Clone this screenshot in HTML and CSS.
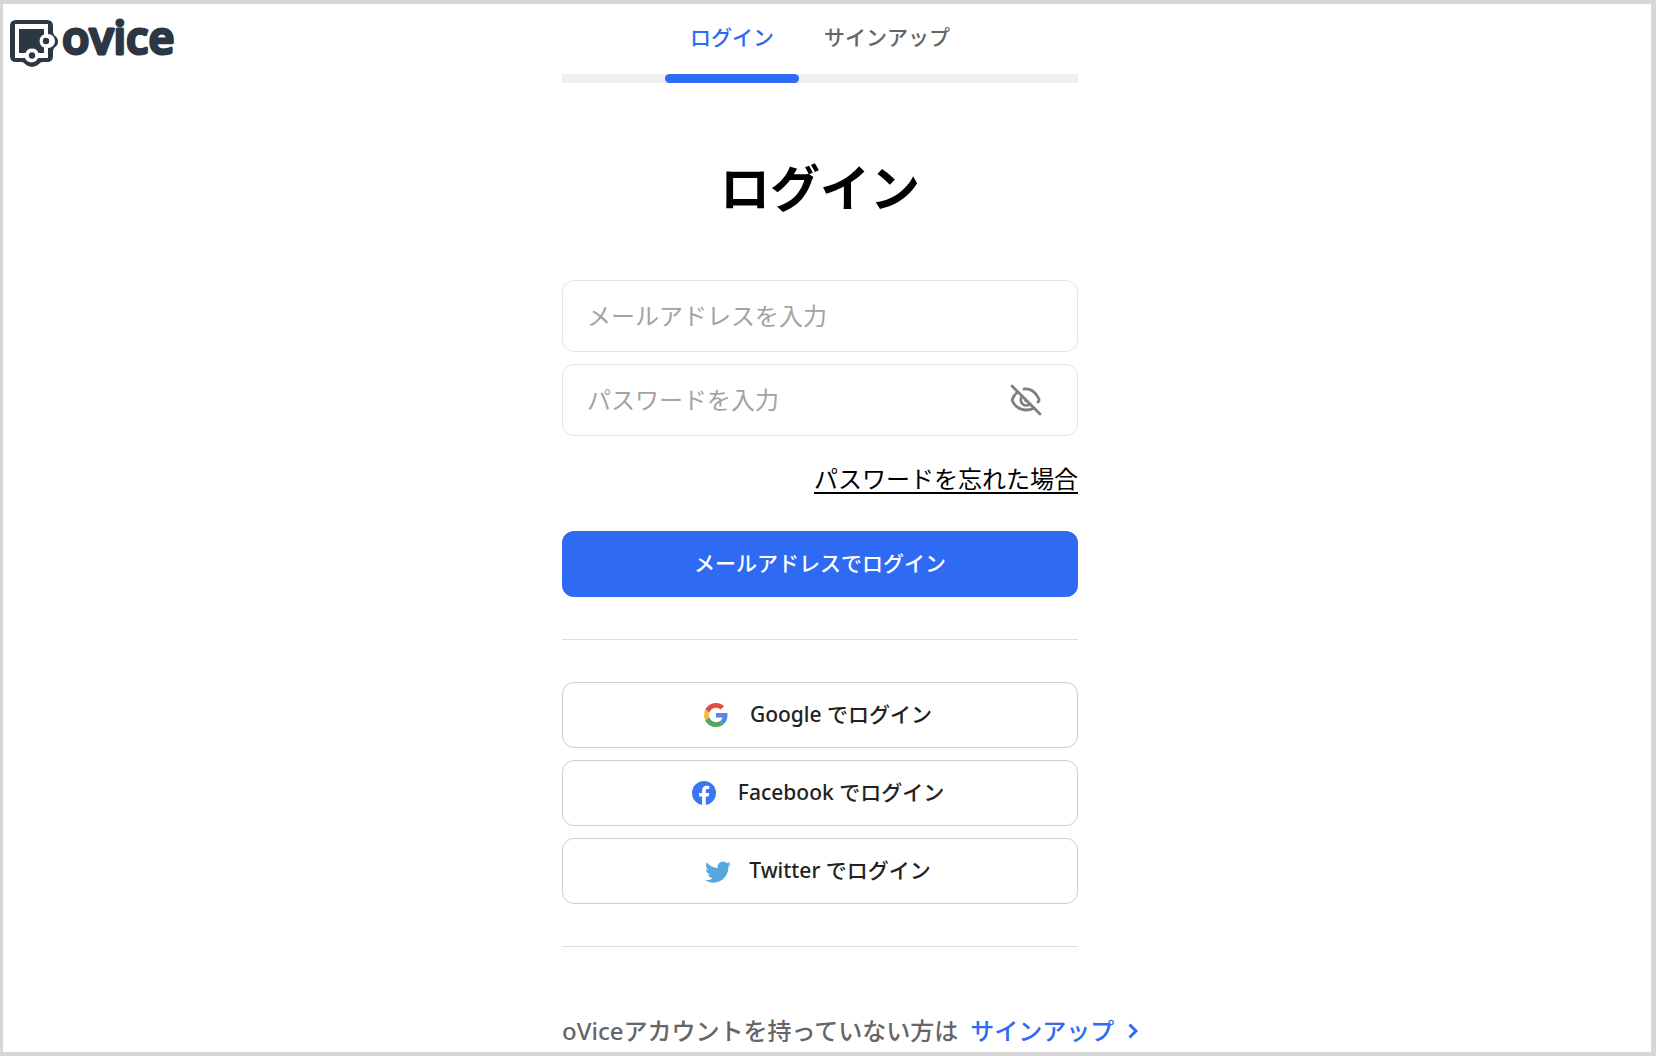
FILE: index.html
```html
<!DOCTYPE html>
<html lang="ja">
<head>
    <meta charset="UTF-8">
    <meta name="viewport" content="width=device-width, initial-scale=1.0">
    <title>ログイン</title>
    <link rel="stylesheet" href="styles.css">
</head>
<body>
    <a class="logo" href="#">
        <svg class="logo-mark" viewBox="0 0 48 48" aria-hidden="true">
            <path fill="#2d3744" d="M6 0h31q6 0 6 6v6q0 2 2 4 3 2 3 5.500t-3 5.500q-2 2-2 4v5q0 6-6 6h-4q-3 0-4 2-3 3-7 3t-7-3q-1-2-4-2H6q-6 0-6-6V6q0-6 6-6z"/>
            <path fill="#fff" d="M5 4h33v10a7 7 0 0 1 0 14v10H28a7 7 0 0 1-13 0H5z"/>
            <path fill="#2d3744" d="M9 9h25v5.500a7 7 0 0 0 0 13V33h-5.500a7 7 0 0 0-13 0H9z"/>
            <circle cx="36" cy="21" r="3.200" fill="#2d3744"/>
            <circle cx="22" cy="35.500" r="3.200" fill="#2d3744"/>
        </svg>
        <svg class="logo-text" viewBox="0 0 118 48">
            <text x="0" y="34">ovice</text>
        </svg>
    </a>

    <main class="container">
        <nav class="tabs">
            <a class="tab active" href="#">ログイン</a>
            <a class="tab" href="#">サインアップ</a>
        </nav>

        <h1 class="title">ログイン</h1>

        <form class="login-form">
            <div class="field">
                <input class="field-input" type="email" placeholder="メールアドレスを入力" aria-label="メールアドレス">
            </div>
            <div class="field">
                <input class="field-input" type="password" placeholder="パスワードを入力" aria-label="パスワード">
                <button class="toggle" type="button" aria-label="パスワードを表示">
                    <svg viewBox="0 0 32 32" fill="none" stroke="#808080" stroke-width="2.800" stroke-linecap="round" aria-hidden="true">
                        <path d="M14 5c6-1 12 3 15 10q.5 1.200-1 3"/>
                        <path d="M7 8.500Q4 11 2.500 15q-.5 1 0 2C6 25 15 28.500 24 24"/>
                        <path d="M12 12.500a5.500 5.500 0 0 0 8 7.500"/>
                        <path d="M15.500 15.500q0 1.500 2 2"/>
                        <path d="M2 2l28 28"/>
                    </svg>
                </button>
            </div>
            <a class="forgot" href="#">パスワードを忘れた場合</a>
            <button class="btn btn-primary" type="submit">メールアドレスでログイン</button>
        </form>

        <div class="social">
            <button class="btn btn-social" type="button">
                <svg class="social-icon" viewBox="0 0 48 48" aria-hidden="true">
                    <path fill="#dc5041" d="M24 9.500c3.540 0 6.710 1.220 9.210 3.600l6.850-6.850C35.900 2.380 30.470 0 24 0 14.620 0 6.510 5.380 2.560 13.220l7.980 6.190C12.430 13.720 17.740 9.500 24 9.500z"/>
                    <path fill="#5486ec" d="M46.980 24.550c0-1.570-.15-3.090-.38-4.550H24v9.020h12.940c-.58 2.960-2.260 5.480-4.780 7.180l7.730 6c4.510-4.180 7.090-10.360 7.090-17.650z"/>
                    <path fill="#f4bd42" d="M10.530 28.590c-.48-1.450-.76-2.990-.76-4.590s.27-3.140.76-4.590l-7.980-6.190C.92 16.460 0 20.120 0 24c0 3.880.92 7.540 2.560 10.780l7.970-6.190z"/>
                    <path fill="#58a55c" d="M24 48c6.480 0 11.930-2.130 15.890-5.810l-7.730-6c-2.150 1.450-4.920 2.300-8.160 2.300-6.260 0-11.570-4.220-13.470-9.910l-7.980 6.190C6.510 42.620 14.620 48 24 48z"/>
                </svg>
                <span class="btn-label">Google でログイン</span>
            </button>
            <button class="btn btn-social" type="button">
                <svg class="social-icon" viewBox="0 0 24 24" aria-hidden="true">
                    <circle cx="12" cy="12" r="12" fill="#3c76ee"/>
                    <path fill="#fff" d="M10.100 23.900v-8.400h-3V12h3V9.400c0-3 1.800-4.700 4.500-4.700 1.300 0 2.700.2 2.700.2v3h-1.500c-1.500 0-2 .9-2 1.900V12h3.400l-.5 3.500h-2.900v8.400q-1.800.2-3.700 0z"/>
                </svg>
                <span class="btn-label">Facebook でログイン</span>
            </button>
            <button class="btn btn-social btn-twitter" type="button">
                <svg class="social-icon" viewBox="0 0 24 24" aria-hidden="true">
                    <path fill="#55a7dc" d="M23.950 5.570a10 10 0 0 1-2.820.77 4.960 4.960 0 0 0 2.160-2.720c-.95.550-2 .95-3.130 1.180a4.920 4.920 0 0 0-8.380 4.480C7.690 9.090 4.070 7.130 1.640 4.160a4.820 4.820 0 0 0-.67 2.480c0 1.710.87 3.210 2.190 4.100a4.900 4.900 0 0 1-2.230-.62v.06a4.920 4.920 0 0 0 3.950 4.830 5 5 0 0 1-2.210.08 4.940 4.940 0 0 0 4.600 3.420A9.870 9.870 0 0 1 0 20.540a13.990 13.990 0 0 0 7.550 2.210c9.050 0 14-7.500 14-13.980 0-.21 0-.42-.02-.63a9.940 9.940 0 0 0 2.460-2.550z"/>
                </svg>
                <span class="btn-label">Twitter でログイン</span>
            </button>
        </div>

        <p class="signup">
            <span>oViceアカウントを持っていない方は</span>
            <a class="signup-link" href="#">
                サインアップ
                <svg class="chevron" viewBox="0 0 10 16" fill="none" stroke="#2f6bf2" stroke-width="3" aria-hidden="true">
                    <path d="M1.500 1.500L8 8l-6.500 6.500"/>
                </svg>
            </a>
        </p>
    </main>
</body>
</html>
```
FILE: styles.css
```css
* {
    margin: 0;
    padding: 0;
    box-sizing: border-box;
}

body {
    display: grid;
    grid-template-columns: 1fr minmax(0, 516px) 1fr;
    align-items: start;
    min-height: 100vh;
    padding-right: 14px;
    border: 4px solid #d6d6d6;
    border-left-width: 3px;
    border-right-width: 5px;
    background: #fff;
    color: #000;
    font-family: "Noto Sans", "Noto Sans CJK JP", sans-serif;
    font-size: 21px;
    font-weight: 500;
}

a {
    color: inherit;
    text-decoration: none;
}

button,
input {
    font: inherit;
}

button {
    cursor: pointer;
}

/* Logo */
.logo {
    display: flex;
    gap: 4px;
    padding: 16px 0 0 7px;
}

.logo-mark {
    width: 48px;
    height: 48px;
}

/* the stroke rounds off the letter ends */
.logo-text {
    width: 118px;
    height: 48px;
    overflow: visible;
    fill: #2d3744;
    stroke: #2d3744;
    stroke-width: 3px;
    stroke-linejoin: round;
    font-family: "Open Sans", sans-serif;
    font-size: 45px;
    font-weight: 600;
}

/* Tabs */
.tabs {
    display: flex;
    justify-content: center;
    height: 79px;
    border-bottom: 9px solid #efeef3;
}

.tab {
    position: relative;
    padding: 0 25px;
    line-height: 66px;
    color: #666;
}

.tab.active {
    color: #2f6bf2;
}

.tab.active::after {
    content: "";
    position: absolute;
    left: 0;
    right: 0;
    top: 70px;
    height: 9px;
    border-radius: 5px;
    background: #2f6bf2;
}

.title {
    padding: 69px 0 55px;
    font-size: 50px;
    line-height: 73px;
    text-align: center;
}

/* Form */
.login-form {
    display: flex;
    flex-direction: column;
    gap: 12px;
    padding-bottom: 42px;
    border-bottom: 1px solid #dedede;
}

.field {
    display: flex;
    align-items: center;
    height: 72px;
    padding: 0 35px 0 24px;
    border: 1px solid #e4e4e4;
    border-radius: 12px;
    font-size: 24px;
    font-weight: 400;
}

.field-input {
    flex: 1;
    min-width: 0;
    height: 100%;
    padding-bottom: 2px;
    border: 0;
    outline: 0;
    background: none;
}

.field-input::placeholder {
    color: #a3a3a3;
}

.toggle {
    width: 32px;
    height: 32px;
    border: 0;
    background: none;
}

.toggle svg {
    display: block;
}

.forgot {
    align-self: flex-end;
    margin: 13px 0 22px;
    font-size: 24px;
    font-weight: 400;
    line-height: 36px;
    text-decoration: underline;
    text-decoration-thickness: 2px;
    text-underline-offset: 4px;
}

.btn {
    display: flex;
    align-items: center;
    justify-content: center;
    width: 100%;
    height: 66px;
    border: 0;
    border-radius: 12px;
}

.btn-primary {
    padding-bottom: 4px;
    background: #2f6bf2;
    color: #fff;
}

.btn-label {
    padding-bottom: 4px;
}

/* Social buttons */
.social {
    display: flex;
    flex-direction: column;
    gap: 12px;
    padding: 42px 0;
    border-bottom: 1px solid #dedede;
}

.btn-social {
    gap: 22px;
    padding-right: 4px;
    border: 1px solid #cdcdcd;
    background: #fff;
    color: #222;
}

.social-icon {
    width: 24px;
    height: 24px;
}

.btn-twitter {
    gap: 18px;
}

.btn-twitter .social-icon {
    width: 26px;
    height: 26px;
}

/* Footer */
.signup {
    display: flex;
    gap: 12px;
    padding-top: 66px;
    font-size: 24px;
    line-height: 36px;
    white-space: nowrap;
    color: #666;
}

.signup-link {
    display: flex;
    align-items: center;
    gap: 14px;
    color: #2f6bf2;
}

.chevron {
    width: 10px;
    height: 16px;
}
```
